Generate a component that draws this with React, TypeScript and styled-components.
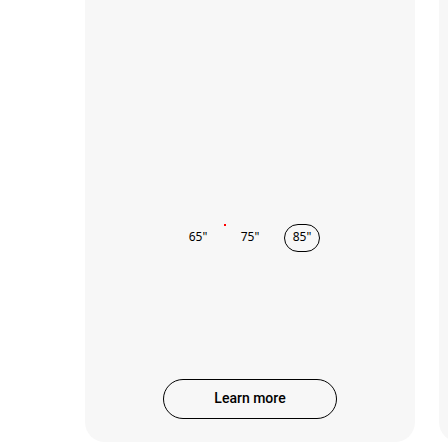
import React, { useState } from "react";
import styled, { createGlobalStyle } from "styled-components";

const GlobalStyle = createGlobalStyle`
  *, *::before, *::after { box-sizing: border-box; }
  body {
    margin: 0;
    background: #fff;
    color: #000;
    font-family: "Noto Sans", "Open Sans", sans-serif;
    overflow: hidden;
  }
`;

const Carousel = styled.main`
  display: flex;
  gap: 24px;
  padding-left: 85px;
  padding-bottom: 6px;
  min-height: 100vh;
  overflow: hidden;
`;

const Card = styled.article`
  display: flex;
  flex: 0 0 330px;
  flex-direction: column;
  align-items: center;
  justify-content: flex-end;
  padding: 24px;
  padding-bottom: 23px;
  border-radius: 0 0 20px 20px;
  background: #f7f7f7;
`;

const Sizes = styled.fieldset`
  display: flex;
  gap: 16px;
  margin: 0 0 127px;
  padding: 0;
  border: 0;
`;

const SizeOption = styled.label`
  position: relative;
  display: flex;
  align-items: center;
  justify-content: center;
  width: 36px;
  height: 28px;
  padding-bottom: 2px;
  border: 1px solid transparent;
  border-radius: 14px;
  font-size: 12px;
  line-height: 16px;
  cursor: pointer;

  &:has(input:checked) {
    border-color: #000;
  }
`;

const SizeInput = styled.input`
  position: absolute;
  inset: 0;
  margin: 0;
  opacity: 0;
  cursor: pointer;
`;

const Marker = styled.span`
  position: absolute;
  top: -1px;
  left: -9px;
  width: 2px;
  height: 2px;
  background: #f00;
`;

const LearnMore = styled.button`
  width: 174px;
  height: 40px;
  padding: 0 16px 2px;
  border: 1px solid #000;
  border-radius: 20px;
  background: transparent;
  color: #000;
  font-family: Roboto, "Noto Sans", sans-serif;
  font-size: 14px;
  font-weight: 500;
  line-height: 20px;
  cursor: pointer;
`;

const sizes = ['65"', '75"', '85"'];

export default function App() {
  const [selected, setSelected] = useState('85"');

  return (
    <>
      <GlobalStyle />
      <Carousel>
        <Card>
          <Sizes aria-label="Screen size">
            {sizes.map((size) => (
              <SizeOption key={size}>
                {size === '75"' && <Marker />}
                <SizeInput
                  type="radio"
                  name="size"
                  value={size}
                  checked={selected === size}
                  onChange={() => setSelected(size)}
                />
                {size}
              </SizeOption>
            ))}
          </Sizes>
          <LearnMore type="button">Learn more</LearnMore>
        </Card>
        <Card />
      </Carousel>
    </>
  );
}
